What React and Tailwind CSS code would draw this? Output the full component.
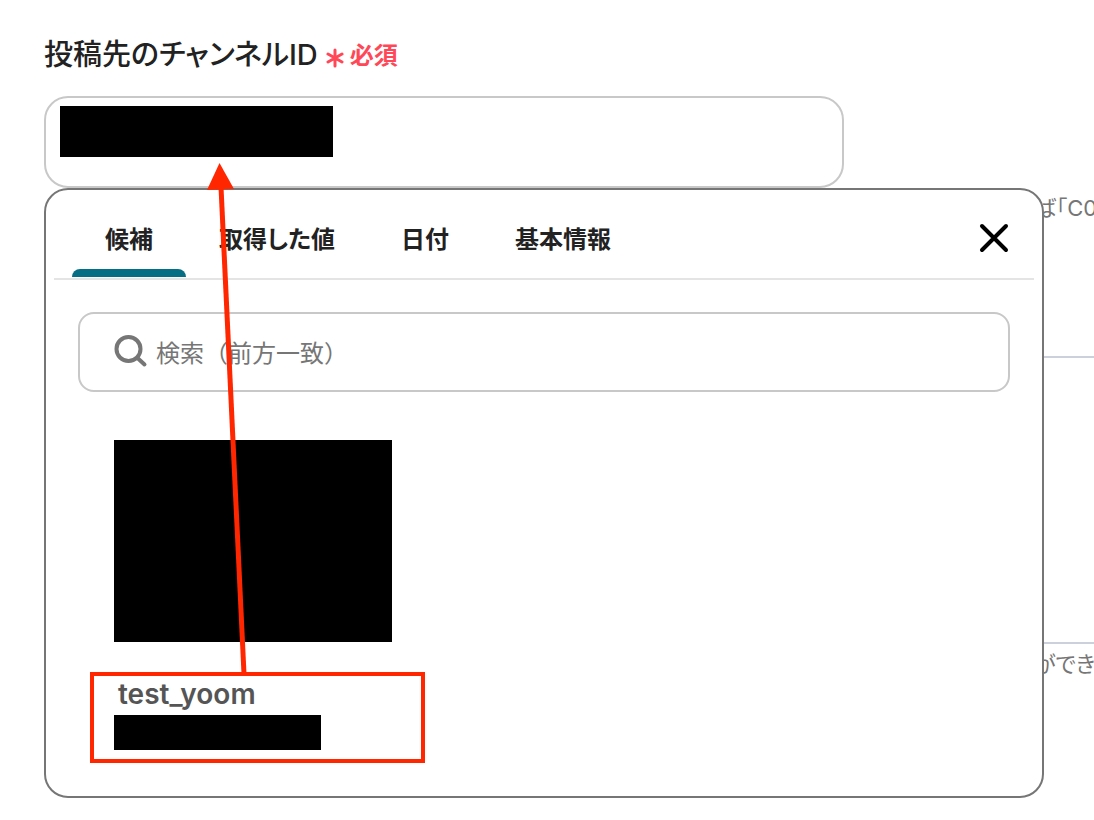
import { useState } from "react";

const TABS = ["候補", "取得した値", "日付", "基本情報"];

function Redacted({ className }) {
  return <span aria-hidden="true" className={`block shrink-0 bg-black ${className}`} />;
}

function RequiredMark() {
  return (
    <span className="flex items-center gap-1.5 pt-1 text-2xl font-semibold text-[#ff4757]">
      <svg viewBox="0 0 18 20" className="mt-1 h-5 w-[18px]" fill="none" stroke="currentColor" strokeWidth="3" strokeLinecap="round">
        <path d="M9 2v16M2 6l14 8M16 6L2 14" />
      </svg>
      必須
    </span>
  );
}

function TabBar({ active, onChange, onClose }) {
  return (
    <div className="mx-2 flex h-[90px] items-stretch border-b-2 border-[#e4e4e4] pl-[18px] pr-6">
      <div role="tablist" className="flex flex-1 pb-px">
        {TABS.map((tab) => (
          <button
            key={tab}
            type="button"
            role="tab"
            aria-selected={tab === active}
            onClick={() => onChange(tab)}
            className="flex flex-col whitespace-nowrap text-2xl font-semibold text-[#222]"
          >
            <span className="flex flex-1 items-center px-[33px] pt-5">{tab}</span>
            <span className={`h-2 w-full rounded-t-lg ${tab === active ? "bg-[#066e84]" : ""}`} />
          </button>
        ))}
      </div>
      <button type="button" aria-label="閉じる" onClick={onClose} className="pt-2 text-black">
        <svg viewBox="0 0 32 32" className="h-8 w-8" fill="none" stroke="currentColor" strokeWidth="4" strokeLinecap="round">
          <path d="M4 4l24 24M28 4L4 28" />
        </svg>
      </button>
    </div>
  );
}

function SearchBox() {
  return (
    <label className="flex h-20 items-center gap-2 rounded-2xl border-2 border-[#c8c8c8] pl-[34px] pr-8">
      <svg viewBox="0 0 34 34" className="h-[34px] w-[34px] shrink-0 text-[#767676]" fill="none" stroke="currentColor" strokeWidth="4" strokeLinecap="round">
        <circle cx="14.5" cy="14" r="12" />
        <path d="M23.5 23l7 6.5" />
      </svg>
      <input
        type="text"
        aria-label="検索"
        placeholder="検索（前方一致）"
        className="min-w-0 flex-1 bg-transparent pt-1 text-2xl text-[#222] outline-none [font-feature-settings:normal] placeholder:text-[#767676]"
      />
    </label>
  );
}

// Arrow from the highlighted candidate up to the field
function Arrow() {
  return (
    <svg
      viewBox="0 0 48 512"
      className="pointer-events-none absolute left-[156px] top-[67px] z-20 h-[512px] w-12 text-[#ff2600]"
      aria-hidden="true"
    >
      <path d="M21 24L44 511" stroke="currentColor" strokeWidth="5" />
      <path d="M19.5 0L34 26L7 27Z" fill="currentColor" />
    </svg>
  );
}

function App() {
  const [activeTab, setActiveTab] = useState(TABS[0]);
  const [open, setOpen] = useState(true);

  return (
    <main className="min-h-screen overflow-hidden bg-white pl-11 pt-9 font-['Inter','Noto_Sans_CJK_JP',sans-serif] [font-feature-settings:'palt']">
      <div className="flex h-9 items-center gap-2">
        <label htmlFor="channel-id" className="pt-0.5 text-[29px] font-medium text-[#222]">
          投稿先のチャンネルID
        </label>
        <RequiredMark />
      </div>

      <div className="relative mt-6 max-w-[1000px]">
        <div className="flex h-[92px] max-w-[800px] rounded-3xl border-2 border-[#c8c8c8] py-2 pl-3.5 pr-4">
          <Redacted className="h-[51px] w-[273px]" />
          <input
            id="channel-id"
            type="text"
            onFocus={() => setOpen(true)}
            className="min-w-0 flex-1 bg-transparent px-2 text-2xl outline-none"
          />
        </div>

        {open && (
          <div className="absolute left-0 top-full z-10 w-full rounded-3xl border-2 border-[#767676] bg-white pb-[33px]">
            <TabBar active={activeTab} onChange={setActiveTab} onClose={() => setOpen(false)} />
            <div className="px-8 pt-8">
              <SearchBox />
              <div className="pl-9 pt-12">
                <Redacted className="h-[202px] w-[278px]" />
              </div>
              <button
                type="button"
                className="ml-3 mt-[30px] flex h-[91px] w-[335px] flex-col items-start border-4 border-[#ff2600] pl-5"
              >
                <span className="pl-1 text-[28px] font-semibold leading-9 text-[#555]">test_yoom</span>
                <Redacted className="mt-[3px] h-[35px] w-[207px]" />
              </button>
            </div>
          </div>
        )}
        {open && <Arrow />}
      </div>

      <div className="whitespace-nowrap text-[22px] leading-8 text-[#767676]">
        <p className="pl-[990px] pt-1">ば「C0</p>
        <div className="mt-[132px] h-[288px] border-y-2 border-[#ccd0dc]" />
        <p className="pl-[990px] pt-1">ができ</p>
      </div>
    </main>
  );
}

export default App;
